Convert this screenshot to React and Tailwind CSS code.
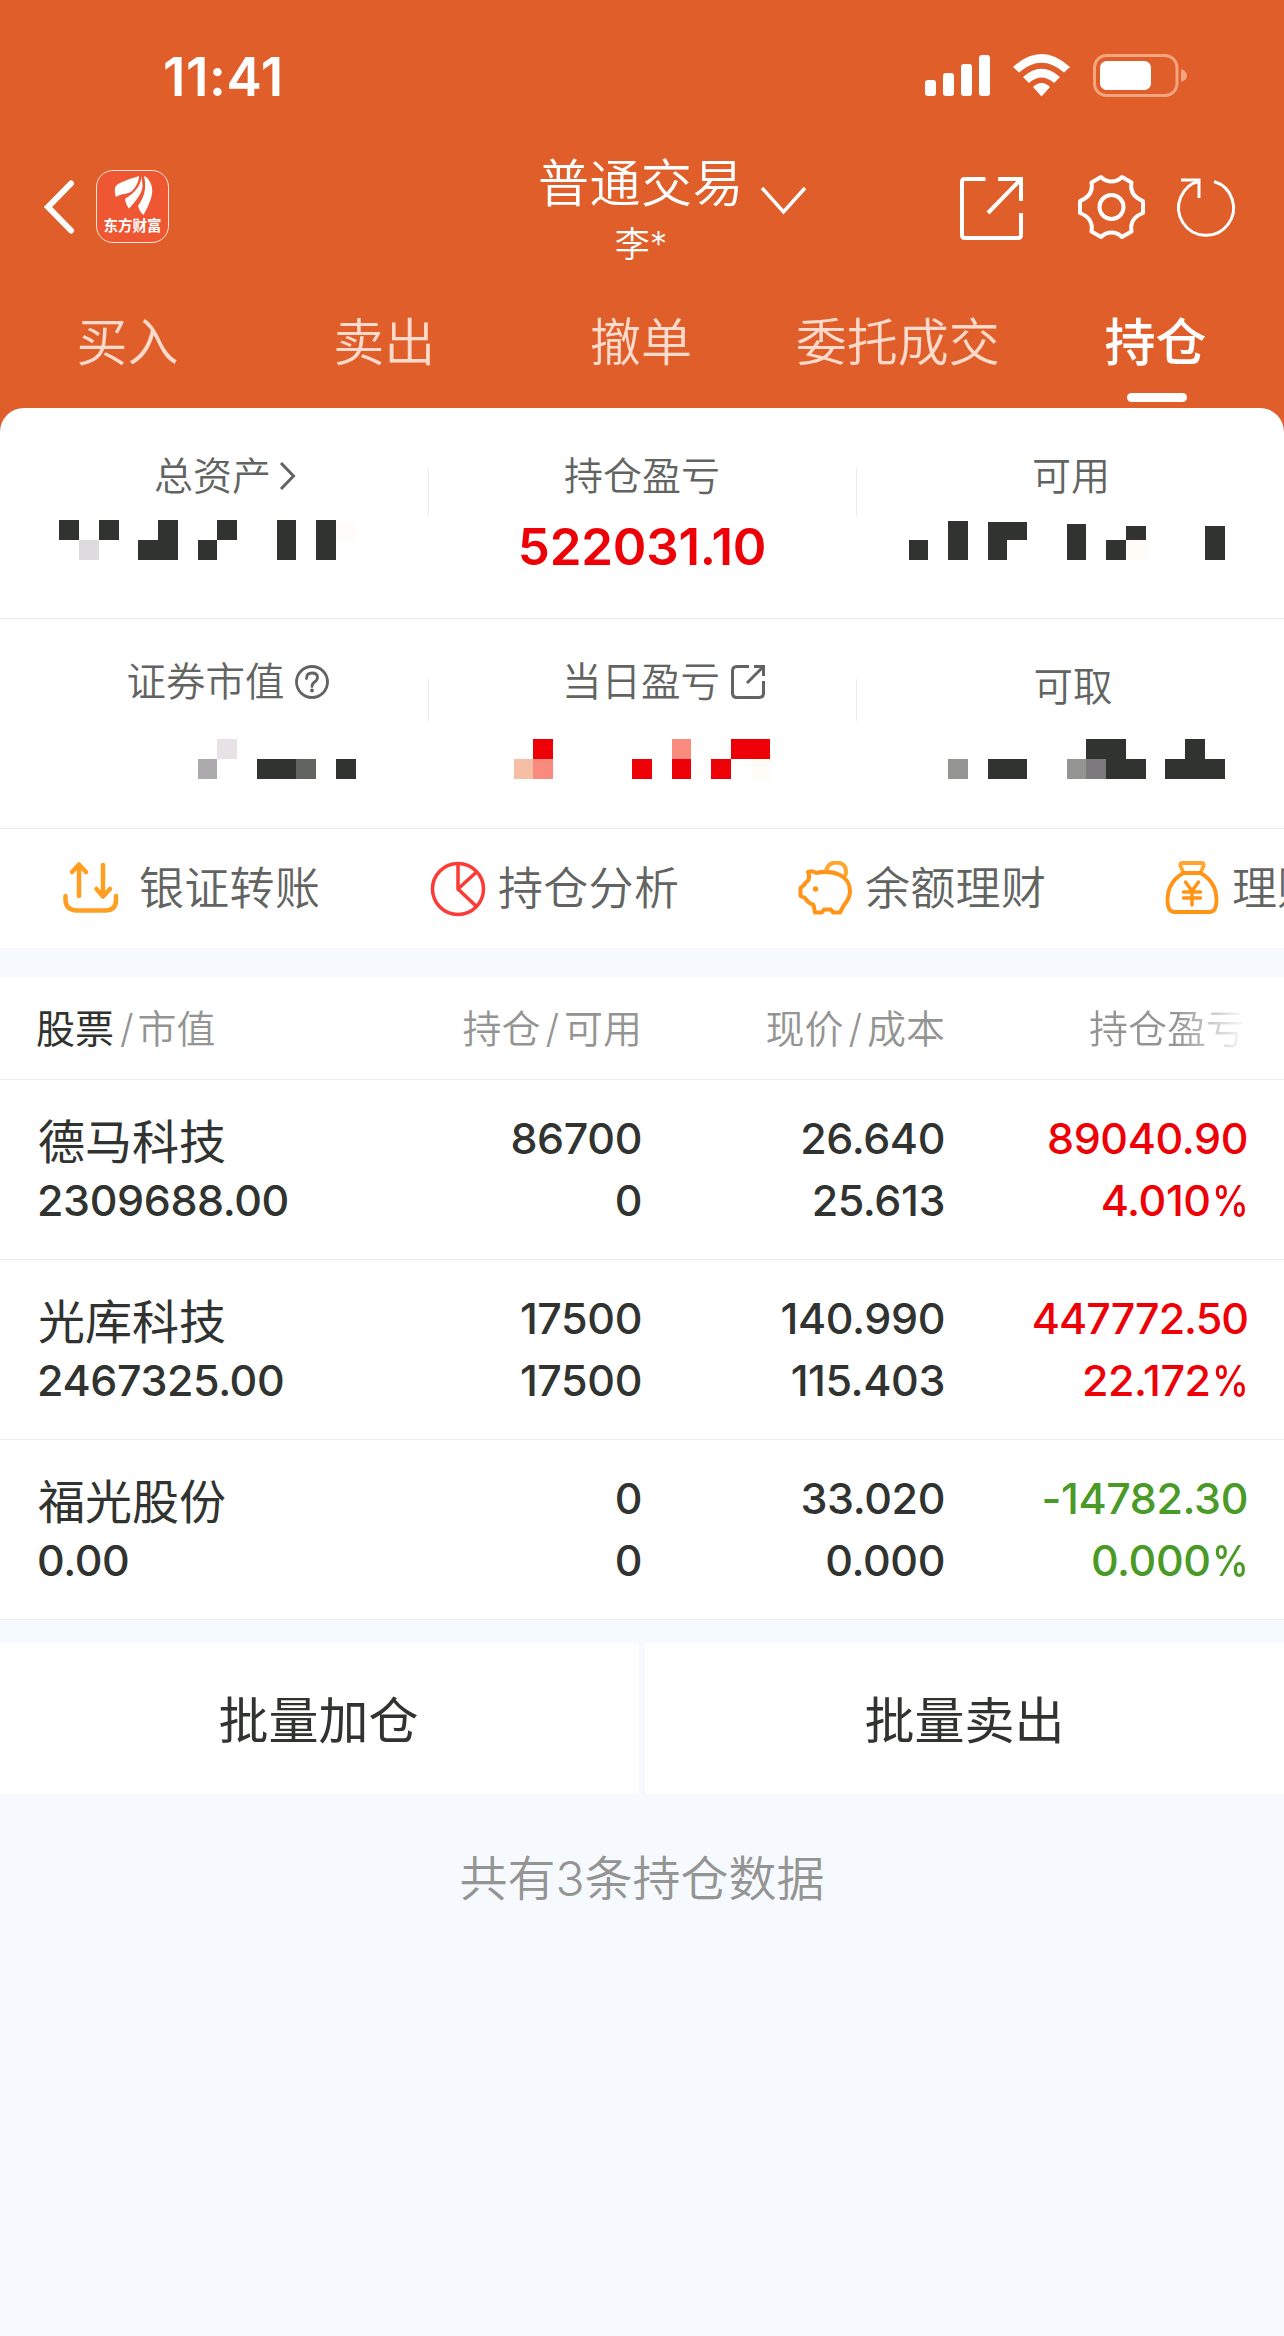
const CJK = "font-['Inter','Noto_Sans_CJK_SC',sans-serif]";

const tabs = ["买入", "卖出", "撤单", "委托成交", "持仓"];

const holdings = [
  { name: "德马科技", value: "2309688.00", qty: "86700", usable: "0", price: "26.640", cost: "25.613", profit: "89040.90", rate: "4.010", color: "text-[#ee0007]" },
  { name: "光库科技", value: "2467325.00", qty: "17500", usable: "17500", price: "140.990", cost: "115.403", profit: "447772.50", rate: "22.172", color: "text-[#ee0007]", tight: true },
  { name: "福光股份", value: "0.00", qty: "0", usable: "0", price: "33.020", cost: "0.000", profit: "-14782.30", rate: "0.000", color: "text-[#4a9a27]" },
];

// masked amounts: [x, y, width, height, color] measured in the cell
const DARK = "#313330";
const masks = {
  total: [
    [59, 0, 20, 20, DARK], [79, 20, 20, 20, "#dedbdf"], [99, 0, 20, 20, DARK],
    [158, 0, 20, 20, DARK], [138, 20, 40, 20, DARK],
    [217, 0, 20, 20, DARK], [198, 20, 19, 20, DARK],
    [277, 0, 19, 40, DARK], [316, 0, 20, 40, DARK], [336, 1, 20, 19, "#fffcf9"],
  ],
  usable: [
    [53, 20, 19, 20, DARK], [92, 1, 20, 39, DARK], [132, 2, 19, 38, DARK], [132, 2, 39, 18, DARK],
    [211, 4, 19, 36, DARK], [250, 20, 20, 20, DARK], [270, 6, 20, 14, DARK],
    [270, 20, 20, 20, "#fffbf6"], [349, 6, 20, 34, DARK],
  ],
  market: [
    [217, 0, 20, 20, "#e6e2e6"], [198, 20, 19, 20, "#acaaac"], [257, 20, 39, 20, DARK],
    [296, 20, 20, 20, "#626461"], [336, 20, 20, 20, DARK],
  ],
  today: [
    [105, 0, 20, 20, "#ee0007"], [86, 20, 19, 20, "#f7bea6"], [105, 20, 20, 20, "#f88b7e"],
    [204, 20, 20, 20, "#ee0007"], [244, 0, 19, 20, "#f88b7e"], [244, 20, 19, 20, "#ee0007"],
    [283, 20, 20, 20, "#ee0007"], [303, 0, 39, 20, "#ee0007"], [323, 20, 19, 20, "#fffbf6"],
  ],
  cash: [
    [92, 20, 20, 20, "#949593"], [132, 20, 39, 20, DARK], [211, 20, 19, 20, "#949593"],
    [230, 0, 40, 20, DARK], [230, 20, 20, 20, "#7c797d"], [250, 20, 40, 20, DARK],
    [309, 20, 60, 20, DARK], [329, 0, 20, 20, DARK],
  ],
};

function Mask({ blocks }) {
  return (
    <svg className="block h-10 w-[428px]" viewBox="0 0 428 40" shapeRendering="crispEdges">
      {blocks.map(([x, y, w, h, fill], i) => (
        <rect key={i} x={x} y={y} width={w} height={h} fill={fill} />
      ))}
    </svg>
  );
}

function StatusBar() {
  return (
    <div className="flex h-[150px] items-start justify-between pl-[163px] pr-[96px]">
      <div className="mt-[46px] text-[53px] leading-[63px] font-semibold tracking-[0.6px]">11:41</div>
      <svg className="mt-[50px] h-[50px] w-[264px]" viewBox="924 50 264 50" fill="#fff">
        <rect x="925" y="80" width="11" height="16" rx="3" />
        <rect x="943" y="73" width="11" height="23" rx="3" />
        <rect x="961" y="64" width="11" height="32" rx="3" />
        <rect x="979" y="55" width="11" height="41" rx="3" />
        <path d="M1013 67Q1041.500 41 1070 67L1064 72.500Q1041.500 53 1019 72.500Z" />
        <path d="M1023 77Q1041.500 60.500 1060 77L1054 83Q1041.500 72 1029 83Z" />
        <path d="M1033 87Q1041.500 79 1050 87L1041.500 96.500Z" />
        <rect x="1094.500" y="55.500" width="82.500" height="40" rx="12" fill="none" stroke="#f2a57e" strokeWidth="3" />
        <rect x="1100" y="61" width="51" height="29" rx="6.500" />
        <path d="M1181 69Q1187 71 1187 75.500Q1187 80 1181 82Z" fill="#f2a57e" />
      </svg>
    </div>
  );
}

function Logo() {
  return (
    <div className="ml-[21px] flex h-[73px] w-[73px] flex-col items-center rounded-[17px] border-[1.5px] border-[#ffe6da] bg-[#ee5732]">
      <svg className="mt-[4px] h-[42px] w-[40px]" viewBox="0 0 40 42" fill="#fff">
        <path d="M26 1C14 5 3 8 2 13C1.500 16 2 19 3 22C8 18 16 20 20 15C24 10 26 6 26 1Z" />
        <path d="M28.500 1C28 10 23 17 12 24C12.500 28 14 31 16 33.500C22 27 30 18 29.500 10Z" />
        <path d="M31 1C34 14 31 22 25 31C26 35 28 38 30.500 40C38 26 42 16 37 7C35.500 4 34 2 31 1Z" />
      </svg>
      <div className="text-[14.5px] leading-[18px] font-bold whitespace-nowrap">东方财富</div>
    </div>
  );
}

function TitleBar() {
  return (
    <div className="flex h-[130px]">
      <div className="flex h-[73px] w-[541px] items-center pl-[43px] mt-[20px]">
        <svg className="h-[56px] w-[32px]" viewBox="0 0 32 56" fill="none" stroke="#fff" strokeWidth="6" strokeLinecap="round">
          <path d="M28 4.500L5 28L28 51.500" strokeLinejoin="miter" />
        </svg>
        <Logo />
      </div>
      <div className="flex w-[200px] flex-col items-center whitespace-nowrap">
        <div className="mt-[2px] text-[51px] leading-[64px] tracking-[0.5px] font-[350]">普通交易</div>
        <div className="mt-[2px] text-[35px] leading-[52px] font-[350]">李*</div>
      </div>
      <svg className="ml-[19px] mt-[36px] h-[30px] w-[48px]" viewBox="760 186 48 30" fill="none" stroke="#fff" strokeWidth="3.500">
        <path d="M762 188L783.500 212L805 188" />
      </svg>
      <svg className="ml-[148px] mt-[22px] h-[70px] w-[290px]" viewBox="956 172 290 70" fill="none" stroke="#fff" strokeWidth="4">
        <path d="M985.500 179H965Q962 179 962 182V235Q962 238 965 238H1018Q1021 238 1021 235V213" />
        <path d="M998 179H1021V201M1021 179L988 213" />
        <path
          d="M1101 177C1107 183 1116 183 1122 177L1131.500 182.500C1130 191 1134 197.500 1143 201V213C1134 216.500 1130 223 1131.500 231.500L1122 237C1116 231 1107 231 1101 237L1091.500 231.500C1093 223 1089 216.500 1080 213V201C1089 197.500 1093 191 1091.500 182.500Z"
          strokeLinejoin="round"
        />
        <circle cx="1111.500" cy="207" r="12" />
        <g strokeWidth="3">
          <path d="M1212 181.500A27.500 27.500 0 1 1 1198 181" transform="translate(2 0)" />
          <path d="M1181 180H1199V198" />
        </g>
      </svg>
    </div>
  );
}

function Tabs() {
  return (
    <div className="grid h-[128px] grid-cols-5 text-[51px] leading-[74px]">
      {tabs.map((t) => {
        const active = t === "持仓";
        return (
          <div key={t} className="flex flex-col items-center pt-[26px] whitespace-nowrap">
            <div className={active ? "font-medium" : "-ml-[2px] font-[350] text-[#fddacb]"}>{t}</div>
            {active && <div className="mt-[13px] ml-[2px] h-[9px] w-[60px] rounded-full bg-white" />}
          </div>
        );
      })}
    </div>
  );
}

function Cell({ label, icon, children, pad = "", size = "text-[39px]" }) {
  return (
    <div className="flex w-[428px] flex-col">
      <div className={`flex h-[56px] items-center justify-center leading-[56px] font-[350] whitespace-nowrap text-[#626462] ${size} ${pad}`}>
        {label}
        {icon}
      </div>
      {children}
    </div>
  );
}

function Divider({ className }) {
  return <div className={`w-px shrink-0 bg-[#ebebeb] -mr-px ${className}`} />;
}

function Summary() {
  return (
    <div className="bg-white rounded-t-[24px]">
      <div className="flex h-[211px] border-b border-[#ebebeb] pt-[40px]">
        <Cell
          label="总资产"
          pad="pl-[24px]"
          icon={
            <svg className="ml-[7px] h-[30px] w-[20px]" viewBox="0 0 20 30" fill="none" stroke="#626462" strokeWidth="3">
              <path d="M3 2L15.500 15L3 28" />
            </svg>
          }
        >
          <div className="mt-[16px]"><Mask blocks={masks.total} /></div>
        </Cell>
        <Divider className="mt-[20px] h-[48px]" />
        <Cell label="持仓盈亏">
          <div className="mt-[5px] text-center text-[51px] leading-[76px] font-semibold tracking-[-0.2px] text-[#ee0007]">522031.10</div>
        </Cell>
        <Divider className="mt-[20px] h-[48px]" />
        <Cell label="可用" pad="pl-[2px]">
          <div className="mt-[16px]"><Mask blocks={masks.usable} /></div>
        </Cell>
      </div>
      <div className="flex h-[210px] border-b border-[#ebebeb] pt-[35px]">
        <Cell
          label="证券市值"
          size="text-[39.5px]"
          pad="pl-[28px] pb-[1px]"
          icon={
            <svg className="ml-[9px] h-[36px] w-[36px]" viewBox="0 0 36 36" fill="none" stroke="#626462" strokeWidth="2.800">
              <circle cx="18" cy="18" r="15.500" />
              <path d="M12.500 14.500Q12.500 9 18 9Q23.500 9 23.500 13.500Q23.500 16 20.500 18Q18 19.700 18 22.500" strokeLinecap="round" />
              <circle cx="18" cy="26.500" r="1.900" fill="#626462" stroke="none" />
            </svg>
          }
        >
          <div className="mt-[29px]"><Mask blocks={masks.market} /></div>
        </Cell>
        <Divider className="mt-[25px] h-[42px]" />
        <Cell
          label="当日盈亏"
          size="text-[39.5px]"
          pad="pl-[44px] pb-[1px]"
          icon={
            <svg className="ml-[10px] h-[36px] w-[36px]" viewBox="0 0 36 36" fill="none" stroke="#626462" strokeWidth="3">
              <path d="M19 2.500H7Q2.500 2.500 2.500 7V29Q2.500 33.500 7 33.500H29Q33.500 33.500 33.500 29V17" />
              <path d="M24 2.500H33.500V12M33 3L17 19" />
            </svg>
          }
        >
          <div className="mt-[29px]"><Mask blocks={masks.today} /></div>
        </Cell>
        <Divider className="mt-[25px] h-[42px]" />
        <Cell label="可取" size="text-[39.5px]" pad="pt-[10px] pl-[6px]">
          <div className="mt-[29px]"><Mask blocks={masks.cash} /></div>
        </Cell>
      </div>
    </div>
  );
}

function TransferIcon() {
  return (
    <svg className="h-[56px] w-[56px]" viewBox="63 861 56 56" fill="none" stroke="#ff9f22" strokeWidth="4.500" strokeLinecap="round" strokeLinejoin="round">
      <path d="M79 896V865M72 872L79 864.500L86 872" />
      <path d="M103 865V895M96.500 889L103 896.500L110 889" />
      <path d="M65.500 896V900Q66 910.500 77 910.500H105Q116 910.500 116 900V896" />
    </svg>
  );
}

function PieIcon() {
  return (
    <svg className="h-[56px] w-[56px]" viewBox="430 860 56 56" fill="none" stroke="#fb3b36" strokeWidth="3.500">
      <circle cx="458" cy="888" r="25.500" />
      <path d="M458 862V888L476.500 905.500M458 888L476.500 871" />
    </svg>
  );
}

function PigIcon() {
  return (
    <svg className="h-[56px] w-[56px]" viewBox="796 861 56 56" fill="none" stroke="#ff9416" strokeWidth="4" strokeLinejoin="round">
      <path d="M815 873Q811 870 807 872Q809 876 807.500 880Q804 883 803 885L799.500 888V896L804 898Q807 903 812.500 905L814 912.500H821L823 909.500H830L832 912.500H839L843 905Q849 898 849 891Q849 880 839 875Q829 870 815 873Z" />
      <path d="M825 871Q827 862.500 835.500 862.500Q845 863 845 872Q845 875 843.500 877" stroke="#ffa62d" />
      <circle cx="814.500" cy="889" r="2.700" fill="#ff9416" stroke="none" />
    </svg>
  );
}

function BagIcon() {
  return (
    <svg className="h-[56px] w-[56px]" viewBox="1163.500 861 56 56" fill="none" stroke="#ff9416" strokeWidth="3.800" strokeLinejoin="round" strokeLinecap="round">
      <path d="M1183 873L1180 866Q1179 863 1182 863H1201Q1204 863 1203 866L1200 873Z" stroke="#ffa62d" />
      <path d="M1183 873Q1167 882 1167 900Q1167 912 1174 912H1209Q1216 912 1216 900Q1216 882 1200 873Z" />
      <path d="M1185 882L1191.500 891L1198 882M1183 892H1200M1183 898H1200M1191.500 891V905" strokeWidth="3.500" />
    </svg>
  );
}

function Shortcuts() {
  const items = [
    { label: "银证转账", icon: <TransferIcon />, gap: "ml-[20px]" },
    { label: "持仓分析", icon: <PieIcon />, gap: "ml-[12px]" },
    { label: "余额理财", icon: <PigIcon />, gap: "ml-[12px]" },
    { label: "理财", icon: <BagIcon />, gap: "ml-[12px]" },
  ];
  return (
    <div className="flex h-[119px] overflow-hidden bg-white pl-[63px]">
      {items.map((item) => (
        <div key={item.label} className="flex w-[367px] shrink-0 items-center whitespace-nowrap">
          {item.icon}
          <span className={`text-[45px] leading-[66px] font-[350] tracking-[0.3px] text-[#626462] ${item.gap}`}>{item.label}</span>
        </div>
      ))}
    </div>
  );
}

function Holdings() {
  return (
    <div className="mt-[29px] bg-white">
      <div className="flex h-[103px] items-center border-b border-[#f0eced] pt-[2px] text-[39px] font-[350] text-[#949593] whitespace-nowrap">
        <div className="w-[339px] pl-[36px]">
          <span className="font-normal text-[#313330]">股票</span>
          <span className="ml-[6px] mr-[4px]">/</span>市值
        </div>
        <div className="w-[303px] text-right">持仓<span className="mx-[5px]">/</span>可用</div>
        <div className="w-[303px] text-right">现价<span className="mx-[5px]">/</span>成本</div>
        <div className="ml-[144px] w-[158px] overflow-hidden bg-linear-to-r from-[#949593] from-55% to-white to-100% bg-clip-text text-transparent">
          持仓盈亏
        </div>
      </div>
      {holdings.map((h) => (
        <div key={h.name} className="flex h-[180px] border-b border-[#ebebeb] pt-[27px] text-[43px] leading-[62px] font-medium tracking-[-0.4px] text-[#313330]">
          <div className="w-[339px] pl-[37px]">
            <div className="h-[62px] pt-[4px] pl-px text-[47px] font-normal tracking-normal">{h.name}</div>
            <div>{h.value}</div>
          </div>
          <div className="w-[303px] text-right">
            <div>{h.qty}</div>
            <div>{h.usable}</div>
          </div>
          <div className="w-[303px] text-right">
            <div>{h.price}</div>
            <div>{h.cost}</div>
          </div>
          <div className={`w-[303px] text-right ${h.color}`}>
            <div className={h.tight ? "tracking-[-1px]" : ""}>{h.profit}</div>
            <div>
              {h.rate}
              <span className="-ml-[5px] inline-block origin-right scale-x-[0.86]">%</span>
            </div>
          </div>
        </div>
      ))}
    </div>
  );
}

export default function App() {
  return (
    <div className={`h-[2336px] w-[1284px] overflow-hidden bg-[#f6faff] ${CJK}`}>
      <div className="bg-[#df5e29] text-white">
        <StatusBar />
        <TitleBar />
        <Tabs />
        <Summary />
      </div>
      <Shortcuts />
      <Holdings />
      <div className="mt-[23px] grid h-[151px] grid-cols-2 gap-[6px] text-[50px] text-[#313330]">
        <button className="bg-white pt-[6px] pr-[2px]">批量加仓</button>
        <button className="bg-white pt-[6px]">批量卖出</button>
      </div>
      <div className="mt-[49px] text-center text-[48px] leading-[72px] font-[350] text-[#949593]">共有3条持仓数据</div>
    </div>
  );
}
